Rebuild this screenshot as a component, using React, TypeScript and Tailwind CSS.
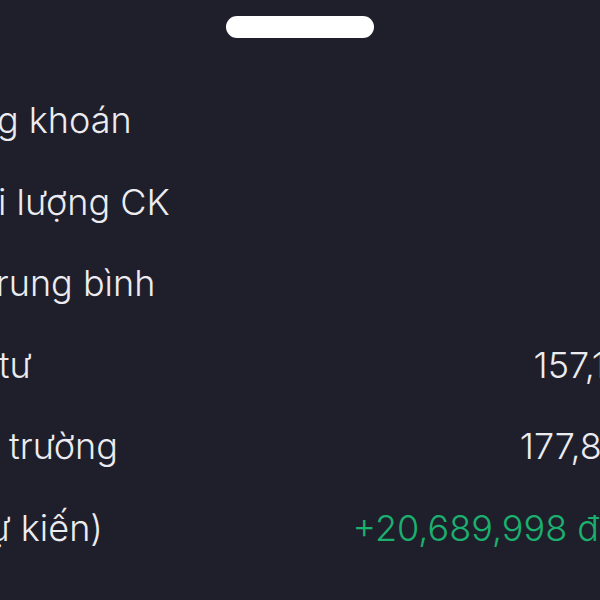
import React from "react";

const rows = [
  { label: "Mã chứng khoán", labelClass: "-ml-[6px]", value: "", valueClass: "" },
  { label: "Tổng khối lượng CK", labelClass: "-ml-[14px]", value: "", valueClass: "" },
  { label: "Giá vốn trung bình", labelClass: "-ml-[8px]", value: "", valueClass: "" },
  { label: "Vốn đầu tư", labelClass: "-ml-[5px]", value: "157,120,002 đ", valueClass: "text-[#ececf0] -mr-[147px]" },
  { label: "Giá trị thị trường", labelClass: "-ml-[5px]", value: "177,810,000 đ", valueClass: "text-[#ececf0] -mr-[135px]" },
  { label: "Lãi/Lỗ (dự kiến)", labelClass: "-ml-[14px]", value: "+20,689,998 đ", valueClass: "text-[#1bb06e] mr-[11px]" },
];

export default function App() {
  return (
    <div
      className="w-[600px] h-[600px] overflow-hidden bg-[#1f1f2c]"
      style={{ fontFamily: "Inter, 'Noto Sans', sans-serif" }}
    >
      <div className="flex justify-center pt-4">
        <div className="w-[148px] h-[22px] rounded-full bg-white" />
      </div>
      <div className="-ml-[144px] w-[754px] mt-[60px] flex flex-col gap-[37.5px]">
        {rows.map((r) => (
          <div
            key={r.label}
            className="flex items-baseline justify-between h-[44px] text-[36px] leading-[44px] whitespace-nowrap"
          >
            <span className={`text-[#ececf0] font-light shrink-0 ${r.labelClass}`}>{r.label}</span>
            {r.value ? (
              <span className={`font-light shrink-0 ${r.valueClass}`}>{r.value}</span>
            ) : null}
          </div>
        ))}
      </div>
    </div>
  );
}
